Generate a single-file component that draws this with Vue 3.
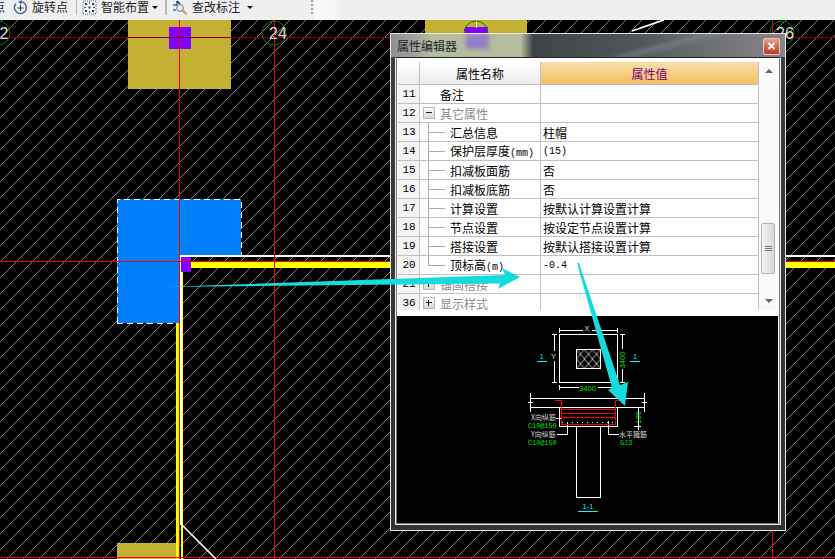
<script setup>
const rows = [
  { no: 11, name: "备注", value: "", kind: "plain" },
  { no: 12, name: "其它属性", value: "", kind: "group", open: true },
  { no: 13, name: "汇总信息", value: "柱帽", kind: "child" },
  { no: 14, name: "保护层厚度", unit: "(mm)", value: "(15)", kind: "child", latin: true },
  { no: 15, name: "扣减板面筋", value: "否", kind: "child" },
  { no: 16, name: "扣减板底筋", value: "否", kind: "child" },
  { no: 17, name: "计算设置", value: "按默认计算设置计算", kind: "child" },
  { no: 18, name: "节点设置", value: "按设定节点设置计算", kind: "child" },
  { no: 19, name: "搭接设置", value: "按默认搭接设置计算", kind: "child" },
  { no: 20, name: "顶标高", unit: "(m)", value: "-0.4", kind: "child", last: true, latin: true },
  { no: 21, name: "锚固搭接", value: "", kind: "group" },
  { no: 36, name: "显示样式", value: "", kind: "group" },
];

const axes = [
  { x: -2, label: "2", tx: 4 },
  { x: 274, label: "24", tx: 278 },
  { x: 476, label: "", tx: 476 },
  { x: 782, label: "26", tx: 785 },
];
</script>

<template>
  <div class="screen">
    <div class="toolbar">
      <span class="tool-text cut">点</span>
      <svg class="tool-icon first" width="15" height="15" viewBox="0 0 15 15">
        <path d="M3 3.5A6 6 0 1 0 8 1.6" fill="none" stroke="#3a5f8f" stroke-width="1.3" />
        <path d="M8.5 0L5 2l3.5 2.4z" fill="#2f6fc0" />
        <path d="M4.5 8h6M7.5 5v6" stroke="#333" stroke-width="1" />
      </svg>
      <span class="tool-text gap4">旋转点</span>
      <i class="sep s1"></i>
      <svg class="tool-icon" width="15" height="15" viewBox="0 0 15 15">
        <rect x="1" y="1" width="13" height="13" fill="#f6f6f6" stroke="#666" stroke-dasharray="1 1" />
        <path d="M3 3h2v2H3zM10 3h2v2h-2zM6.5 6.5h2v2h-2zM3 10h2v2H3zM10 10h2v2h-2z" fill="#1f3f7f" />
        <path d="M7 2h1v2H7zM2 7h2v1H2zM11 7h2v1h-2zM7 11h1v2H7z" fill="#555" />
      </svg>
      <span class="tool-text gap4">智能布置</span>
      <i class="caret c1"></i>
      <i class="sep s2"></i>
      <svg class="tool-icon third" width="16" height="15" viewBox="0 0 16 15">
        <path d="M1 5h4V1M1 10h3" fill="none" stroke="#2f6fc0" stroke-width="1.6" />
        <path d="M5 1l3 3" stroke="#222" stroke-width="1.2" />
        <circle cx="8" cy="8" r="3.4" fill="#e6eef6" stroke="#777" />
        <path d="M10.5 10.5l4 3.5" stroke="#c89a40" stroke-width="2" />
      </svg>
      <span class="tool-text gap4">查改标注</span>
      <i class="caret c2"></i>
      <i class="grip"></i>
      <i class="tool-end"></i>
    </div>

    <svg class="canvas" width="835" height="539" viewBox="0 20 835 539">
      <defs>
        <pattern id="hatch" x="6" y="0" width="16" height="16" patternUnits="userSpaceOnUse">
          <path d="M-1 17L17 -1" stroke="#c0c0c0" stroke-width="0.7" />
        </pattern>
      </defs>
      <rect x="0" y="20" width="835" height="539" fill="#000" />
      <rect x="0" y="20" width="835" height="539" fill="url(#hatch)" />

      <rect x="128" y="20" width="103" height="69" fill="#c4b032" />
      <rect x="425" y="20" width="102" height="69" fill="#c4b032" />
      <rect x="117" y="543" width="62" height="16" fill="#c4b032" />
      <rect x="169" y="27" width="22" height="22" fill="#8000ff" />
      <rect x="465" y="27" width="23" height="22" fill="#8000ff" />

      <g shape-rendering="crispEdges">
        <path d="M117 199H241V255H180V323H117Z" fill="#0080ff" />
        <path d="M117.5 323V199.5H241.5V255M117 323.5H176" fill="none" stroke="#fff" stroke-dasharray="6 4" />
        <rect x="176" y="323" width="3" height="236" fill="#ffff00" />
        <rect x="181" y="272" width="2" height="287" fill="#ffff00" />
        <rect x="182" y="262" width="653" height="6" fill="#ffff00" />
        <rect x="180" y="255" width="655" height="2" fill="#fff" />
        <rect x="180" y="255" width="1.5" height="270" fill="#fff" />
        <rect x="181" y="257" width="10" height="15" fill="#8000ff" />

        <rect x="0" y="37" width="835" height="1" fill="#8a0000" />
        <rect x="0" y="261" width="835" height="1" fill="#f00000" />
        <rect x="0" y="557" width="835" height="1" fill="#f00000" />
        <rect x="179" y="20" width="1" height="539" fill="#f00000" />
        <rect x="274" y="20" width="1" height="539" fill="#f00000" />
        <rect x="476" y="20" width="1" height="8" fill="#f4f4f4" />
        <rect x="772" y="20" width="1" height="539" fill="#f00000" />
      </g>

      <path d="M181 524L216 559" stroke="#fff" stroke-width="1.6" />
      <path d="M632 31L664 20" stroke="#fff" stroke-width="1.8" />

      <g v-for="a in axes" :key="a.x">
        <circle :cx="a.x" cy="33" r="12" fill="none" stroke="#008000" />
        <text v-if="a.label" class="axis" :x="a.tx" y="38.5" text-anchor="middle">{{ a.label }}</text>
      </g>
    </svg>

    <div class="dialog">
      <div class="titlebar">
        <i class="title-blur"></i>
        <span class="title-text">属性编辑器</span>
        <button class="close">
          <svg width="9" height="8" viewBox="0 0 9 8">
            <path d="M1.5 1l6 6M7.5 1l-6 6" stroke="#fff" stroke-width="2" />
          </svg>
        </button>
      </div>

      <div class="client">
        <div class="client-inner">
          <div class="props">
            <div class="grid">
              <div class="head">
                <div class="cell no head-no"></div>
                <div class="cell name head-name">属性名称</div>
                <div class="cell value head-value">属性值</div>
              </div>
              <div v-for="r in rows" :key="r.no" class="row">
                <div class="cell no">{{ r.no }}</div>
                <div class="cell name" :class="{ muted: r.kind === 'group' }">
                  <span v-if="r.kind === 'plain'" class="indent"></span>
                  <span v-if="r.kind === 'group'" class="expander">
                    <i class="bar-h"></i>
                    <i v-if="!r.open" class="bar-v"></i>
                  </span>
                  <span v-if="r.kind === 'child'" class="branch" :class="{ last: r.last }"></span>
                  <span class="label">{{ r.name }}<span v-if="r.unit" class="unit">{{ r.unit }}</span></span>
                </div>
                <div class="cell value" :class="{ latin: r.latin }">{{ r.value }}</div>
              </div>
            </div>
            <div class="scrollbar">
              <i class="arrow up"></i>
              <div class="track">
                <div class="thumb"><i></i><i></i><i></i></div>
              </div>
              <i class="arrow down"></i>
            </div>
          </div>

          <div class="preview">
            <svg width="381" height="207" viewBox="397 316 381 207">
              <defs>
                <pattern id="lattice" x="576.5" y="349.5" width="8" height="9.5" patternUnits="userSpaceOnUse">
                  <path d="M0 0L8 9.5M8 0L0 9.5" stroke="#fff" stroke-width="0.7" />
                </pattern>
              </defs>
              <rect x="576.5" y="349.5" width="24" height="19" fill="url(#lattice)" />
              <g fill="none" stroke="#fff" shape-rendering="crispEdges">
                <rect x="559.5" y="334.5" width="58" height="48" />
                <rect x="576.5" y="349.5" width="24" height="19" />
                <path d="M559 330.5h24M592 330.5h25M559.5 328v5M617.5 328v5" />
                <path d="M554.5 334v17M554.5 361v22M552 334.5h5M552 382.5h5" />
                <path d="M622.5 334v15M622.5 369v14M620 334.5h5M620 382.5h5" />
                <path d="M559 387.5h20M598 387.5h20M559.5 385v5M617.5 385v5" />
                <path d="M530.5 393v19M644.5 393v19M530 398.5h115M530 407.5h115M528 402h5M642 402h5" />
                <path d="M559.5 407v19.5h58V407" />
                <path d="M576.5 427v70.5h24V427" />
                <path d="M556 418.5h5M557 434.5h10.5V423M608.5 421v13.5H619M638.5 407v23M634 426.5h7" />
              </g>
              <g fill="none" stroke="#ff0000" shape-rendering="crispEdges">
                <path d="M555 400.5h6.5V424.5h54V400.5h5" />
                <path d="M562 409.5h53M562 413.5h53M562 417.5h53" />
              </g>
              <path d="M562 422.5h54" stroke="#ffe9a0" stroke-dasharray="1 4" shape-rendering="crispEdges" />
              <g stroke="#00ffff" shape-rendering="crispEdges">
                <path d="M537 361.5h10M630 361.5h10M578 511.5h20" />
              </g>

              <text class="dim white" x="587" y="331">X</text>
              <text class="dim white" x="553.5" y="359">Y</text>
              <text class="dim green" x="587.5" y="390.5">3400</text>
              <text class="dim green" transform="rotate(-90 625 360)" x="625" y="360">3400</text>
              <text class="dim green" transform="rotate(-90 640.5 417.5)" x="640.5" y="417.5">100</text>
              <text class="dim cyan" x="541.5" y="359">1</text>
              <text class="dim cyan" x="635" y="359">1</text>
              <text class="dim cyan" x="588" y="509">1-1</text>

              <text class="cjk" x="531" y="420">X向纵筋</text>
              <text class="code" x="528" y="428">C10@150</text>
              <text class="cjk" x="531" y="437">Y向纵筋</text>
              <text class="code" x="528" y="445">C10@150</text>
              <text class="cjk" x="619" y="437">水平箍筋</text>
              <text class="code" x="620" y="445">GJ3</text>
            </svg>
          </div>
        </div>
      </div>
    </div>

    <svg class="notes" width="835" height="559" viewBox="0 0 835 559">
      <path d="M165 287L505 275L502 268L520 277L498 289L500 283.5Z" fill="#15dcdc" />
      <path d="M577 263L579 263L620 385L628 382L625 406L608 390L612 388Z" fill="#15dcdc" />
    </svg>
  </div>
</template>

<style>
html,
body {
  margin: 0;
  background: #000;
}
</style>

<style scoped>
.screen {
  position: relative;
  width: 835px;
  height: 559px;
  overflow: hidden;
  display: flex;
  flex-direction: column;
  font-family: "Noto Sans CJK SC", "Liberation Sans", sans-serif;
  font-size: 12px;
  color: #000;
}

.toolbar {
  height: 20px;
  flex: none;
  box-sizing: border-box;
  padding-bottom: 6px;
  display: flex;
  align-items: center;
  background: #efefef;
  color: #222;
}
.tool-text {
  line-height: 14px;
  white-space: nowrap;
}
.cut {
  margin-left: -7px;
}
.tool-icon {
  flex: none;
  margin-left: 5px;
}
.tool-icon.first {
  margin-left: 8px;
}
.tool-icon.third {
  margin-left: 4px;
}
.gap4 {
  margin-left: 4px;
}
.sep {
  flex: none;
  width: 1px;
  height: 15px;
  background: #b8b8b8;
}
.s1 {
  margin-left: 8px;
}
.s2 {
  margin-left: 7px;
  margin-right: 1px;
  width: 2px;
}
.caret {
  flex: none;
  width: 0;
  height: 0;
  border-left: 3px solid transparent;
  border-right: 3px solid transparent;
  border-top: 3px solid #111;
}
.c1 {
  margin-left: 3px;
}
.c2 {
  margin-left: 7px;
}
.grip {
  flex: none;
  margin-left: 58px;
  width: 2px;
  height: 14px;
  background: repeating-linear-gradient(#a8a8a8 0 2px, transparent 2px 4px);
}
.tool-end {
  flex: none;
  margin-left: 2px;
  width: 27px;
  height: 20px;
  margin-bottom: -6px;
  background: linear-gradient(90deg, #fafafa, #f6f6f6 70%, #efefef);
}

.canvas {
  display: block;
  flex: none;
}
.axis {
  font-family: "Liberation Sans", sans-serif;
  font-size: 16px;
  fill: #d8d8d8;
}

.dialog {
  position: absolute;
  left: 390px;
  top: 33px;
  width: 396px;
  height: 498px;
  box-sizing: border-box;
  border: 1px solid #e8e8e8;
  display: flex;
  flex-direction: column;
  background: linear-gradient(#3c3e44, #2f3136);
}
.titlebar {
  position: relative;
  height: 23px;
  flex: none;
  display: flex;
  align-items: center;
  background:
    linear-gradient(165deg, transparent 62%, rgba(130, 140, 150, 0.45) 66%, transparent 72%),
    linear-gradient(90deg, #8f8f8f, #a8a89e 30px, #b4bd9d 40px, #b4bd9d 130px, #3e4347 142px, #50585d 250px, #676b6f 300px, #85858a);
  overflow: hidden;
}
.title-blur {
  position: absolute;
  left: 75px;
  top: 0;
  width: 23px;
  height: 15px;
  background: #8a70d0;
  filter: blur(2px);
  opacity: 0.8;
}
.title-text {
  position: relative;
  margin-left: 6px;
  color: #20242c;
  line-height: 16px;
}
.close {
  margin: 1px 5px 0 auto;
  width: 17px;
  height: 17px;
  padding: 0;
  display: flex;
  align-items: center;
  justify-content: center;
  border: 1px solid #e0c8c0;
  border-radius: 2px;
  background: linear-gradient(#e59f8c, #d8684c 50%, #b83c20);
}

.client {
  flex: 1;
  min-height: 0;
  margin: 0 4px 5px 4px;
  border: 1px solid #eee;
  border-top-color: #222;
  display: flex;
}
.client-inner {
  flex: 1;
  min-width: 0;
  border: 1px solid #777;
  border-top-color: #fff;
  background: #fff;
  padding: 3px 1px 0 0;
  display: flex;
  flex-direction: column;
}

.props {
  display: flex;
  height: 248px;
  flex: none;
  margin-bottom: 6px;
  padding-left: 1px;
  overflow: hidden;
}
.grid {
  width: 361px;
  flex: none;
  overflow: hidden;
  font-size: 12px;
}
.head,
.row {
  display: flex;
  box-sizing: border-box;
  border-bottom: 1px solid #c0c0c0;
}
.head {
  height: 23px;
}
.row {
  height: 19px;
}
.cell {
  box-sizing: border-box;
  display: flex;
  align-items: center;
  border-right: 1px solid #c0c0c0;
  white-space: nowrap;
  overflow: hidden;
}
.no {
  width: 22px;
  justify-content: center;
  padding-left: 1px;
  font-family: "Liberation Mono", monospace;
  font-size: 11px;
  background: #f4f4f4;
}
.name {
  width: 121px;
}
.value {
  width: 218px;
  padding-left: 2px;
}
.value.latin {
  font-family: "Liberation Mono", monospace;
  font-size: 10px;
}
.head-no,
.head-name {
  background: linear-gradient(#fff, #ececec);
}
.head-name {
  justify-content: center;
}
.head-value {
  justify-content: center;
  padding-left: 0;
  color: #800080;
  background: linear-gradient(#f9dfa9, #f3c063);
}
.muted {
  color: #8c8c8c;
}
.indent {
  width: 20px;
  flex: none;
}
.label {
  line-height: 18px;
  padding-top: 2px;
}
.expander {
  position: relative;
  width: 10px;
  height: 10px;
  flex: none;
  margin: 0 5px 0 3px;
  border: 1px solid #b8b8b8;
  background: linear-gradient(#f8f8f8, #d8d8d8);
}
.bar-h,
.bar-v {
  position: absolute;
  background: #222;
}
.bar-h {
  left: 2px;
  right: 2px;
  top: 4px;
  height: 1px;
}
.bar-v {
  top: 2px;
  bottom: 2px;
  left: 4px;
  width: 1px;
}
.branch {
  align-self: flex-start;
  flex: none;
  width: 17px;
  height: 19px;
  margin: 0 5px 0 8px;
  background:
    linear-gradient(#aaa, #aaa) 0 0 / 1px 100% no-repeat,
    linear-gradient(#aaa, #aaa) 0 9px / 100% 1px no-repeat;
}
.branch.last {
  background:
    linear-gradient(#aaa, #aaa) 0 0 / 1px 10px no-repeat,
    linear-gradient(#aaa, #aaa) 0 9px / 100% 1px no-repeat;
}
.unit {
  font-family: "Liberation Mono", monospace;
  font-size: 10px;
}

.scrollbar {
  flex: 1;
  display: flex;
  flex-direction: column;
  align-items: center;
  background: #fafafa;
}
.arrow {
  flex: none;
  width: 0;
  height: 0;
  border-left: 4px solid transparent;
  border-right: 4px solid transparent;
}
.arrow.up {
  margin: 7px 0 7px;
  border-bottom: 4px solid #666;
}
.arrow.down {
  margin: 7px 0 7px;
  border-top: 4px solid #666;
}
.track {
  flex: 1;
  align-self: stretch;
  padding-top: 143px;
  box-sizing: border-box;
}
.thumb {
  box-sizing: border-box;
  width: 14px;
  height: 51px;
  margin-left: 2px;
  display: flex;
  flex-direction: column;
  align-items: center;
  justify-content: center;
  gap: 1px;
  border: 1px solid #b4b4b4;
  border-radius: 2px;
  background: linear-gradient(90deg, #f4f4f4, #d8d8d8);
}
.thumb i {
  width: 7px;
  height: 1px;
  background: #777;
}

.preview {
  flex: 1;
  min-height: 0;
  background: #000;
}
.preview svg {
  display: block;
}
.dim {
  font-family: "Liberation Sans", sans-serif;
  font-size: 7.5px;
  text-anchor: middle;
}
.white {
  fill: #ddd;
}
.green {
  fill: #00e000;
}
.cyan {
  fill: #00e8e8;
}
.cjk {
  font-family: "Noto Sans CJK SC", sans-serif;
  font-size: 7px;
  fill: #ddd;
}
.code {
  font-family: "Liberation Mono", monospace;
  font-size: 6.8px;
  fill: #00e000;
}

.notes {
  position: absolute;
  left: 0;
  top: 0;
  pointer-events: none;
}
</style>
